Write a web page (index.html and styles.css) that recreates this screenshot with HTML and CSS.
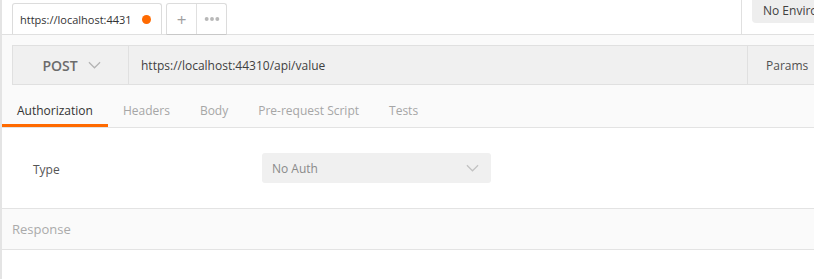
FILE: index.html
```html
<!DOCTYPE html>
<html lang="en">
<head>
  <meta charset="UTF-8">
  <meta name="viewport" content="width=device-width,initial-scale=1.0">
  <title>Request</title>
  <link rel="stylesheet" href="styles.css">
</head>
<body>
  <div class="app">
    <!-- top tab strip -->
    <div class="tabbar">
      <div class="req-tab">
        <span class="req-tab-name">https://localhost:4431</span>
        <span class="dot"></span>
      </div>
      <div class="tab-tools">
        <div class="tool plus">+</div>
        <div class="tool more">
          <svg viewBox="0 0 18 6"><circle cx="3" cy="3" r="2.2"/><circle cx="9" cy="3" r="2.2"/><circle cx="15" cy="3" r="2.2"/></svg>
        </div>
      </div>
      <div class="spacer"></div>
      <div class="env-wrap">
        <div class="env">No Environment</div>
      </div>
    </div>

    <!-- url bar + request tabs -->
    <div class="request">
      <div class="urlbar">
        <div class="method">
          POST
          <svg class="chev" viewBox="0 0 14 8"><path d="M1 1l6 6 6-6" fill="none" stroke="#b3b3b3" stroke-width="1.3"/></svg>
        </div>
        <div class="url">https://localhost:44310/api/value</div>
        <div class="params">Params</div>
      </div>
      <div class="req-tabs">
        <div class="req-tab-item active">Authorization</div>
        <div class="req-tab-item">Headers</div>
        <div class="req-tab-item">Body</div>
        <div class="req-tab-item">Pre-request Script</div>
        <div class="req-tab-item">Tests</div>
      </div>
    </div>

    <!-- auth pane -->
    <div class="auth">
      <div class="auth-label">Type</div>
      <div class="select">
        No Auth
        <svg class="chev" viewBox="0 0 14 8"><path d="M1 1l6 6 6-6" fill="none" stroke="#c2c2c2" stroke-width="1.3"/></svg>
      </div>
    </div>

    <!-- response -->
    <div class="response">Response</div>
    <div class="response-body"></div>
  </div>
</body>
</html>
```

FILE: styles.css
```css
* { margin:0; padding:0; box-sizing:border-box; }
body {
  font-family:"Open Sans", "Liberation Sans", sans-serif;
  font-size:12px;
  color:#505050;
  background:#fff;
  overflow:hidden;
}
.app {
  height:279px;
  border-left:2px solid #e4e4e4;
  display:flex; flex-direction:column;
}

/* top tab strip */
.tabbar {
  height:35px;
  display:flex; align-items:flex-end;
  border-bottom:1px solid #e0e0e0;
  padding-left:10px;
  background:#fff;
}
.req-tab {
  width:150px; height:31px;
  border:1px solid #dcdcdc; border-bottom:none;
  border-radius:3px 3px 0 0;
  display:flex; align-items:center;
  padding:0 10px 0 7px;
  color:#333;
  font-size:11px;
}
.req-tab-name { flex:1; white-space:nowrap; overflow:hidden; }
.dot {
  width:9px; height:9px; border-radius:50%;
  background:#ff6a00;
}
.tab-tools {
  display:flex;
  margin-left:4px;
  border:1px solid #dcdcdc;
  border-radius:3px 3px 0 0;
  border-bottom:1px solid #c8c8c8;
  margin-bottom:-1px; height:32px;
}
.tool {
  width:29px;
  display:flex; align-items:center; justify-content:center;
  color:#a0a0a0;
}
.plus { font-size:17px; border-right:1px solid #e0e0e0; width:30px; }
.more svg { width:16px; height:6px; fill:#b8b8b8; }
.spacer { flex:1; }
.env-wrap {
  align-self:stretch;
  width:73px;
  border-left:1px solid #e0e0e0;
  padding-left:10px;
}
.env {
  height:23px;
  background:#eeeeee;
  border-radius:0 0 0 4px;
  padding:0 0 0 11px;
  line-height:22px;
  white-space:nowrap; overflow:hidden;
  color:#404040;
}

/* request area */
.request {
  background:#fafafa;
  padding-top:10px;
  border-bottom:1px solid #e3e3e3;
}
.urlbar {
  margin-left:10px;
  height:40px;
  display:flex;
  border:1px solid #e0e0e0;
  border-right:none;
  background:#f0f0f0;
}
.method {
  width:116px;
  display:flex; align-items:center; justify-content:center; gap:10px;
  font-size:14px; font-weight:600;
  color:#6b6b6b;
  border-right:1px solid #e0e0e0;
  padding-left:2px;
}
.chev { width:13px; height:8px; }
.url {
  flex:1;
  display:flex; align-items:center;
  padding-left:12px;
  color:#404040;
}
.params {
  width:67px;
  border-left:1px solid #e0e0e0;
  display:flex; align-items:center;
  padding-left:18px;
  color:#505050;
}
.req-tabs {
  display:flex;
  height:42px;
}
.req-tab-item {
  padding:11px 15px 0;
  display:flex; align-items:center;
  color:#a6a6a6;
  border-bottom:3px solid transparent;
}
.req-tab-item.active {
  color:#333;
  border-bottom-color:#ff6a00;
}

/* auth pane */
.auth {
  height:81px;
  display:flex; align-items:center;
  padding-left:31px;
  border-bottom:1px solid #e3e3e3;
}
.auth-label { width:229px; color:#555; margin-top:2px; }
.select {
  width:229px; height:30px;
  background:#f0f0f0;
  border-radius:3px;
  display:flex; align-items:center; justify-content:space-between;
  padding:0 12px 0 10px;
  color:#8a8a8a;
}

/* response */
.response {
  height:41px;
  background:#fafafa;
  border-bottom:1px solid #e3e3e3;
  display:flex; align-items:center;
  padding-left:10px;
  font-size:13px;
  color:#aaa;
}
.response-body { flex:1; }
```
